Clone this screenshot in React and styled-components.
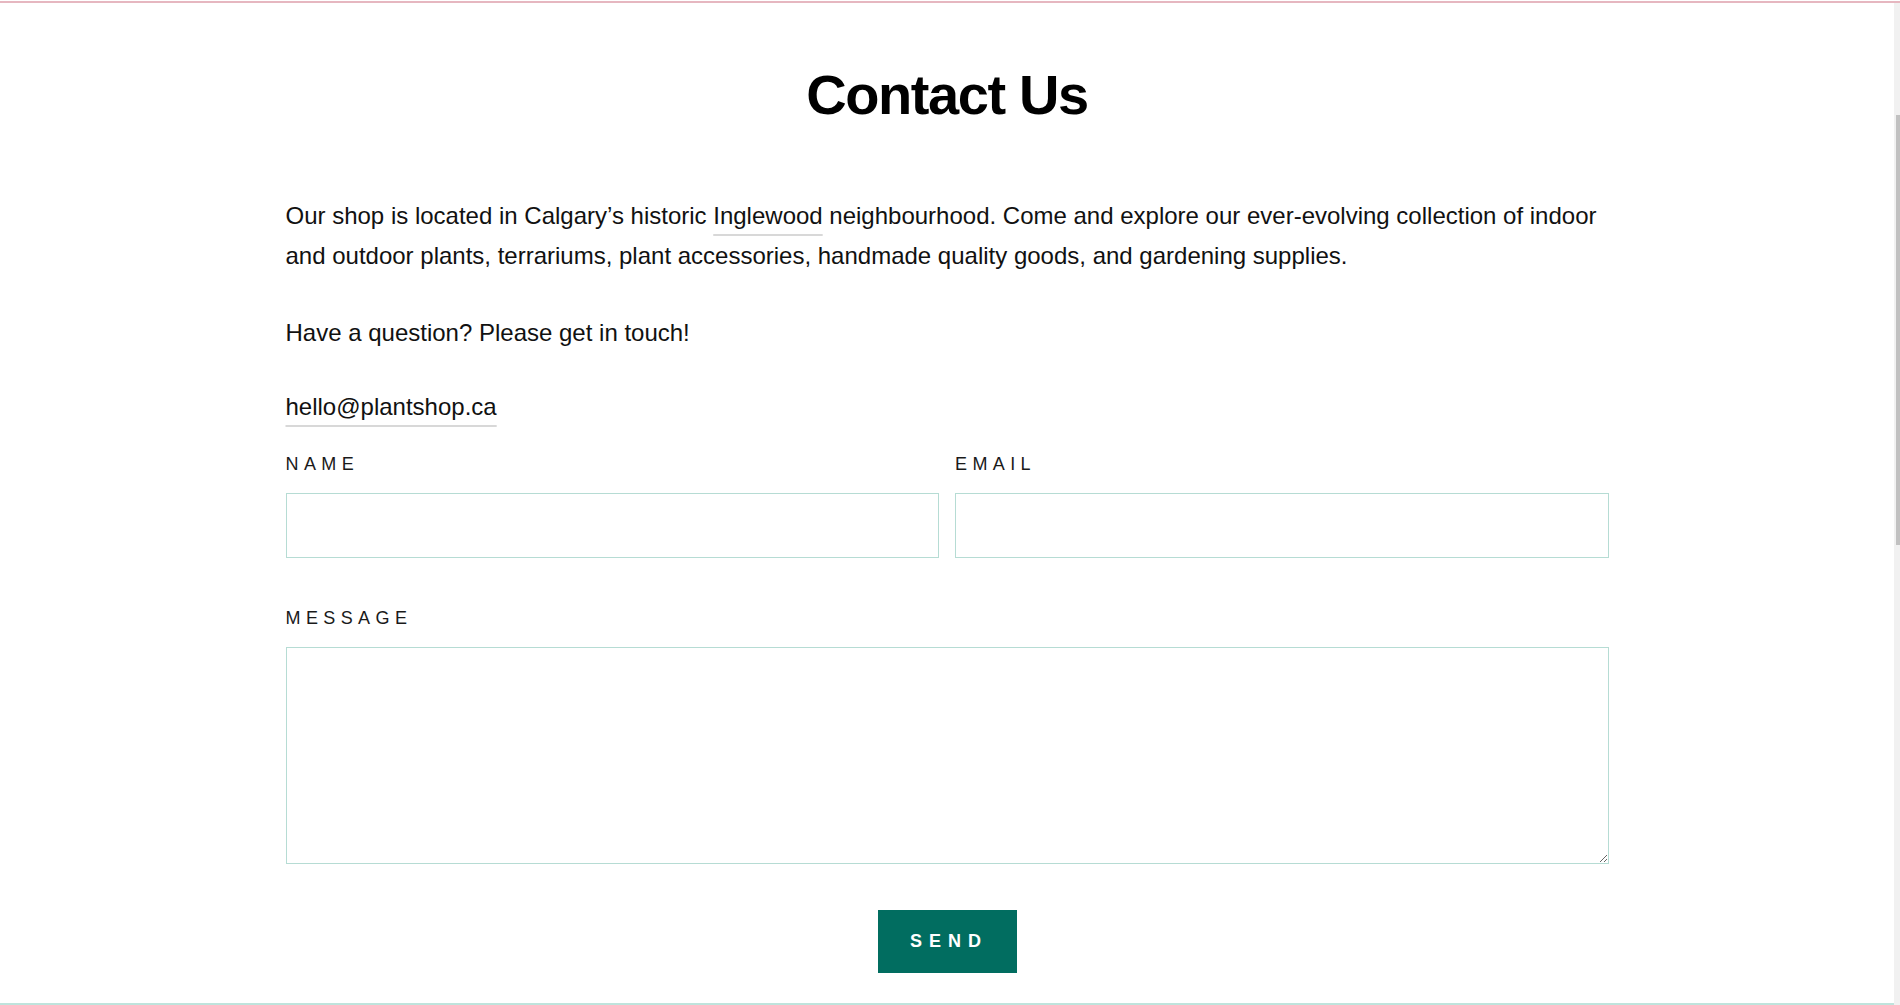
import React from "react";
import styled, { createGlobalStyle } from "styled-components";

const GlobalStyle = createGlobalStyle`
  html, body {
    margin: 0;
    padding: 0;
    background: #fff;
    overflow: hidden;
  }
  body {
    font-family: "Liberation Sans", Arial, sans-serif;
    color: #111;
  }
  * { box-sizing: border-box; }
`;

const App = () => {
  return (
    <Page>
      <GlobalStyle />
      <TopLine />
      <Body>
        <Main>
          <Title>Contact Us</Title>
          <Content>
            <Text>
              Our shop is located in Calgary’s historic <Link>Inglewood</Link>{" "}
              neighbourhood. Come and explore our ever-evolving collection of
              indoor and outdoor plants, terrariums, plant accessories, handmade
              quality goods, and gardening supplies.
            </Text>
            <Text $gap="37px">Have a question? Please get in touch!</Text>
            <Text $gap="34px">
              <Link>hello@plantshop.ca</Link>
            </Text>
            <Form>
              <Row>
                <Field>
                  <Label>Name</Label>
                  <Input type="text" />
                </Field>
                <Field>
                  <Label>Email</Label>
                  <Input type="email" />
                </Field>
              </Row>
              <Field>
                <Label>Message</Label>
                <TextArea />
              </Field>
              <ButtonRow>
                <SendButton type="button">Send</SendButton>
              </ButtonRow>
            </Form>
          </Content>
          <BottomLine />
        </Main>
        <ScrollTrack>
          <ScrollThumb />
        </ScrollTrack>
      </Body>
    </Page>
  );
};

export default App;

const Page = styled.div`
  width: 100%;
  height: 1005px;
  display: flex;
  flex-direction: column;
`;

const TopLine = styled.div`
  margin-top: 1px;
  height: 2px;
  background: #e6b7c0;
  flex-shrink: 0;
`;

const Body = styled.div`
  flex: 1;
  display: flex;
`;

const Main = styled.main`
  flex: 1;
  display: flex;
  flex-direction: column;
  align-items: center;
`;

const Title = styled.h1`
  margin: 64px 0 0;
  font-size: 56px;
  line-height: 56px;
  font-weight: 700;
  letter-spacing: -1.4px;
  color: #000;
  text-align: center;
`;

const Content = styled.div`
  width: 1323px;
  margin-top: 73px;
`;

const Text = styled.p`
  margin: ${(p) => p.$gap || "0"} 0 0;
  font-size: 24px;
  line-height: 40px;
  color: #111;
`;

const Link = styled.a`
  color: inherit;
  text-decoration: underline;
  text-decoration-color: #d8d8d8;
  text-decoration-thickness: 2px;
  text-underline-offset: 10px;
  cursor: pointer;
`;

const Form = styled.form`
  margin-top: 28px;
  display: flex;
  flex-direction: column;
`;

const Row = styled.div`
  display: grid;
  grid-template-columns: 1fr 1fr;
  column-gap: 16px;
  margin-bottom: 51px;
`;

const Field = styled.div`
  display: flex;
  flex-direction: column;
`;

const Label = styled.label`
  font-size: 18px;
  line-height: 18px;
  letter-spacing: 5.4px;
  text-transform: uppercase;
  color: #1a1a1a;
  margin-bottom: 20px;
`;

const Input = styled.input`
  height: 65px;
  border: 1px solid #b6dcd4;
  border-radius: 0;
  outline: none;
  padding: 0 16px;
  font-family: inherit;
  font-size: 20px;
  background: #fff;
`;

const TextArea = styled.textarea`
  height: 217px;
  border: 1px solid #b6dcd4;
  border-radius: 0;
  outline: none;
  padding: 16px;
  font-family: inherit;
  font-size: 20px;
  resize: vertical;
  display: block;
`;

const ButtonRow = styled.div`
  display: flex;
  justify-content: center;
  margin-top: 46px;
`;

const SendButton = styled.button`
  width: 139px;
  height: 63px;
  background: #016d60;
  color: #fff;
  border: none;
  border-radius: 0;
  font-family: "Liberation Sans", Arial, sans-serif;
  font-weight: 700;
  font-size: 18px;
  letter-spacing: 7px;
  padding: 0 0 0 4px;
  text-transform: uppercase;
  cursor: pointer;
`;

const BottomLine = styled.div`
  width: 100%;
  margin-top: 30px;
  height: 2px;
  background: #bfe3dc;
`;

const ScrollTrack = styled.div`
  width: 6px;
  background: #f1f1f1;
  padding-top: 112px;
  padding-left: 2px;
`;

const ScrollThumb = styled.div`
  width: 4px;
  height: 430px;
  background: #c1c1c1;
`;
